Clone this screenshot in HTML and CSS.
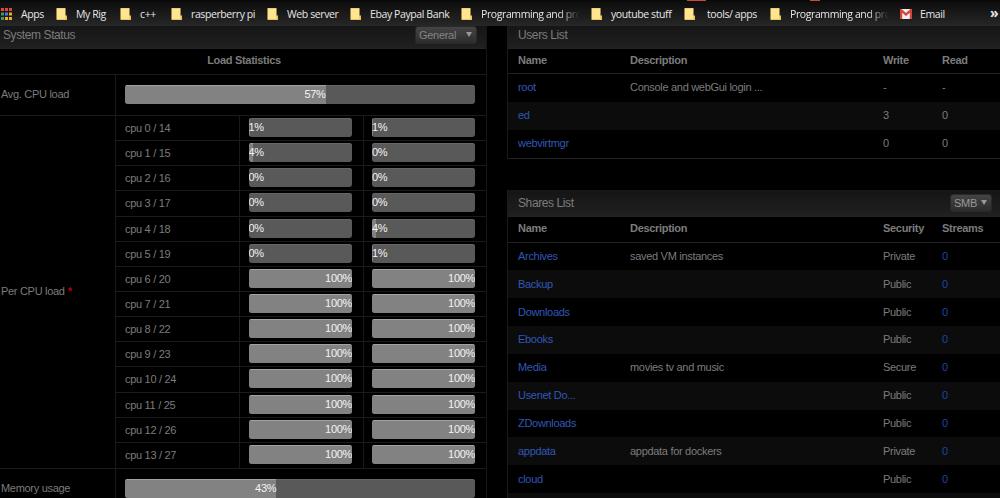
FILE: index.html
```html
<!DOCTYPE html>
<html lang="en">
<head>
    <meta charset="UTF-8">
    <meta name="viewport" content="width=device-width, initial-scale=1.0">
    <title>System Status</title>
    <link rel="stylesheet" href="styles.css">
</head>
<body>
    <svg class="symbols" aria-hidden="true">
        <symbol id="folder" viewBox="0 0 11 12">
            <path d="M.5 0h9v7.5H11V12H.5z" fill="#e3bd4c"/>
            <path d="M.8.5h8.4v8h.8v2.7H.8z" fill="#ffe591"/>
            <path d="M9 12V9l1.5-1.5V12z" fill="#f3ce5d"/>
        </symbol>
    </svg>

    <nav class="bookmarks">
        <a class="bookmark apps">
            <svg width="13" height="13" viewBox="0 0 13 13">
                <path d="M1 0h3v3H1zM5 0h3v3H5z" fill="#e2453a"/>
                <path d="M9 0h3v3H9z" fill="#e2453a"/>
                <path d="M1 4.5h3v3H1z" fill="#3b9b5c"/>
                <path d="M5 4.5h3v3H5z" fill="#3b82e8"/>
                <path d="M9 4.5h3v3H9z" fill="#f0ae25"/>
                <path d="M1 9h3v3H1z" fill="#3b9b5c"/>
                <path d="M5 9h3v3H5zM9 9h3v3H9z" fill="#f0ae25"/>
            </svg>
            <span>Apps</span>
        </a>
        <a class="bookmark"><svg class="folder"><use href="#folder"/></svg><span>My Rig</span></a>
        <a class="bookmark"><svg class="folder"><use href="#folder"/></svg><span>c++</span></a>
        <a class="bookmark"><svg class="folder"><use href="#folder"/></svg><span>rasperberry pi</span></a>
        <a class="bookmark"><svg class="folder"><use href="#folder"/></svg><span>Web server</span></a>
        <a class="bookmark"><svg class="folder"><use href="#folder"/></svg><span>Ebay Paypal Bank</span></a>
        <a class="bookmark"><svg class="folder"><use href="#folder"/></svg><span class="faded">Programming and pro</span></a>
        <a class="bookmark"><svg class="folder"><use href="#folder"/></svg><span>youtube stuff</span></a>
        <a class="bookmark tools"><svg class="folder"><use href="#folder"/></svg><span>tools/ apps</span></a>
        <a class="bookmark"><svg class="folder"><use href="#folder"/></svg><span class="faded">Programming and pro</span></a>
        <a class="bookmark email">
            <svg width="12" height="10" viewBox="0 0 12 10">
                <path d="M0 0h12v10H0z" fill="#eee"/>
                <path d="M0 10V0h1.5L6 4 10.500 0H12v10H9.800V3.800L6 7 2.200 3.800V10z" fill="#d5443a"/>
            </svg>
            <span>Email</span>
        </a>
        <a class="more">»</a>
        <i class="mark mark-wide"></i>
        <i class="mark mark-small"></i>
    </nav>

    <main class="page">
        <section class="panel status">
            <header class="panel-title"><h2>System Status</h2><button class="select general">General <i></i></button></header>
            <div class="caption">Load Statistics</div>
            <div class="load-row average">
                <div class="label">Avg. CPU load</div>
                <div class="cell"><div class="bar"><span style="width: 57.3%">57%</span></div></div>
            </div>
            <div class="load-row cpus">
                <div class="label">Per CPU load <b>*</b></div>
                <div class="cpu-list" id="cpu-list"></div>
            </div>
            <div class="load-row memory">
                <div class="label">Memory usage</div>
                <div class="cell"><div class="bar"><span style="width: 43.2%">43%</span></div></div>
            </div>
        </section>

        <div class="lists">
            <section class="panel users">
                <header class="panel-title"><h2>Users List</h2></header>
                <div class="row head"><span>Name</span><span>Description</span><span>Write</span><span>Read</span></div>
                <div class="row"><a>root</a><span>Console and webGui login ...</span><span>-</span><span>-</span></div>
                <div class="row"><a>ed</a><span></span><span>3</span><span>0</span></div>
                <div class="row"><a>webvirtmgr</a><span></span><span>0</span><span>0</span></div>
            </section>

            <section class="panel shares">
                <header class="panel-title"><h2>Shares List</h2><button class="select">SMB <i></i></button></header>
                <div class="row head"><span>Name</span><span>Description</span><span>Security</span><span>Streams</span></div>
                <div class="row"><a>Archives</a><span>saved VM instances</span><span>Private</span><a>0</a></div>
                <div class="row"><a>Backup</a><span></span><span>Public</span><a>0</a></div>
                <div class="row"><a>Downloads</a><span></span><span>Public</span><a>0</a></div>
                <div class="row"><a>Ebooks</a><span></span><span>Public</span><a>0</a></div>
                <div class="row"><a>Media</a><span>movies tv and music</span><span>Secure</span><a>0</a></div>
                <div class="row"><a>Usenet Do...</a><span></span><span>Public</span><a>0</a></div>
                <div class="row"><a>ZDownloads</a><span></span><span>Public</span><a>0</a></div>
                <div class="row"><a>appdata</a><span>appdata for dockers</span><span>Private</span><a>0</a></div>
                <div class="row"><a>cloud</a><span></span><span>Public</span><a>0</a></div>
                <div class="row"></div>
            </section>
        </div>
    </main>

    <script>
        // Load of each core and its hyperthread
        const loads = [
            [1, 1], [4, 0], [0, 0], [0, 0], [0, 4], [0, 1], [100, 100],
            [100, 100], [100, 100], [100, 100], [100, 100], [100, 100], [100, 100], [100, 100]
        ];
        const list = document.getElementById('cpu-list');

        loads.forEach((pair, cpu) => {
            const row = document.createElement('div');
            row.className = 'cpu';
            row.innerHTML = `<div class="cpu-name">cpu ${cpu} / ${cpu + 14}</div>` + pair.map(load =>
                `<div class="cell"><div class="bar"><span style="width: ${load}%">${load}%</span></div></div>`
            ).join('');
            list.appendChild(row);
        });
    </script>
</body>
</html>
```
FILE: styles.css
```css
* {
    box-sizing: border-box;
}
body {
    margin: 0;
    height: 498px;
    overflow: hidden;
    background: #000;
    color: #7c7c7c;
    font-family: "Liberation Sans", Arial, sans-serif;
    font-size: 11px;
    letter-spacing: -0.3px;
}
.symbols {
    position: absolute;
    width: 0;
    height: 0;
}

/* bookmarks bar */
.bookmarks {
    position: relative;
    display: grid;
    grid-template-columns: 56px 64px 51px 96px 83px 111px 130px 93px 86px 130px 90px 10px;
    align-items: center;
    height: 26px;
    padding-top: 1px;
    background: linear-gradient(#0c0c0c, #272727);
    border-top: 1px solid #080808;
    color: #e6e6e6;
    font-family: "Open Sans", "Noto Sans", sans-serif;
    font-size: 10.5px;
    line-height: 14px;
    letter-spacing: -0.4px;
    white-space: nowrap;
}
.bookmark {
    display: flex;
    align-items: center;
    gap: 9px;
}
.bookmark svg {
    flex: none;
}
.bookmark span {
    margin-top: -1px;
}
.folder {
    width: 11px;
    height: 12px;
}
.apps, .email {
    gap: 8px;
}
.tools {
    gap: 12px;
}
.faded {
    -webkit-mask-image: linear-gradient(90deg, #000 78px, transparent 99px);
    mask-image: linear-gradient(90deg, #000 78px, transparent 99px);
}
.more {
    margin-top: -3px;
    font-size: 14px;
    font-weight: bold;
}
.mark {
    position: absolute;
    top: -1px;
    height: 1px;
    background: #c9493d;
}
.mark-wide {
    left: 687px;
    width: 19px;
}
.mark-small {
    left: 810px;
    width: 10px;
}

/* panels */
.page {
    display: grid;
    grid-template-columns: 487px 493px;
    column-gap: 20px;
}
.panel-title {
    display: flex;
    align-items: center;
    justify-content: space-between;
    height: 23px;
    padding: 0 9px 4px 3px;
    background: linear-gradient(#151515, #202020);
    border-bottom: 1px solid #242424;
}
.panel-title h2 {
    margin: 0;
    font-size: 12px;
    font-weight: normal;
    letter-spacing: -0.4px;
}
.select {
    display: flex;
    align-items: center;
    justify-content: space-between;
    width: 42px;
    height: 18px;
    padding: 0 4px 1px 3px;
    border: 1px solid #292929;
    border-radius: 3px;
    background: linear-gradient(#444, #2d2d2d);
    color: #999;
    font: 11px "Liberation Sans", Arial, sans-serif;
    letter-spacing: -0.3px;
}
.select i {
    border: 3px solid transparent;
    border-top: 5px solid #999;
    border-bottom: 0;
}
.general {
    width: 62px;
    color: #858585;
}

/* load statistics */
.status {
    border-right: 1px solid #161616;
}
.caption {
    height: 26px;
    padding-left: 2px;
    border-bottom: 1px solid #1b1b1b;
    line-height: 23px;
    text-align: center;
    font-weight: bold;
}
.load-row {
    display: grid;
    grid-template-columns: 116px 1fr;
    border-bottom: 1px solid #1b1b1b;
}
.label {
    display: flex;
    align-items: center;
    padding: 0 0 2px 1px;
    border-right: 1px solid #191919;
}
.label b {
    margin-left: 3px;
    color: #c00000;
}
.average {
    height: 41px;
}
.memory {
    height: 42px;
}
.cell {
    display: flex;
    align-items: center;
    padding: 0 11px 2px 9px;
}
.bar {
    width: 100%;
    height: 19px;
    overflow: hidden;
    border-radius: 3px;
    background: #595959;
    box-shadow: inset 0 1px #666;
}
.bar span {
    display: block;
    height: 100%;
    background: #828282;
    box-shadow: inset 0 1px #a2a2a2;
    color: #f4f4f4;
    line-height: 19px;
    text-align: right;
}
.cpu {
    display: grid;
    grid-template-columns: 123.5px 123.5px 1fr;
    height: 25.15px;
    border-bottom: 1px solid #1b1b1b;
}
.cpu:last-child {
    border-bottom: 0;
}
.cpu-name {
    padding-left: 9px;
    border-right: 1px solid #191919;
    line-height: 24px;
}
.cpu .cell {
    padding-bottom: 1px;
}
.cpu .cell + .cell {
    border-left: 1px solid #191919;
    padding-left: 8px;
}

/* users and shares */
.lists {
    display: flex;
    flex-direction: column;
    gap: 31px;
}
.lists .panel {
    border-left: 1px solid #1b1b1b;
}
.lists .panel-title {
    padding-left: 10px;
}
.users {
    border-bottom: 1px solid #222;
}
.shares {
    border-top: 1px solid #181818;
}
.shares .panel-title {
    height: 26px;
    padding: 0 8px 0 10px;
}
.row {
    display: grid;
    grid-template-columns: 112px 253px 59px 1fr;
    align-items: center;
    height: 27.85px;
    padding: 0 0 1px 10px;
}
.row:nth-child(even):not(.head) {
    background: #0c0c0c;
}
.row a {
    color: #3157b8;
}
.row a + a, .row span + a {
    color: #1f43a8;
}
.head {
    height: 25px;
    padding-bottom: 2px;
    border-bottom: 1px solid #222;
    font-weight: bold;
}
.shares .head {
    height: 26px;
}
```
